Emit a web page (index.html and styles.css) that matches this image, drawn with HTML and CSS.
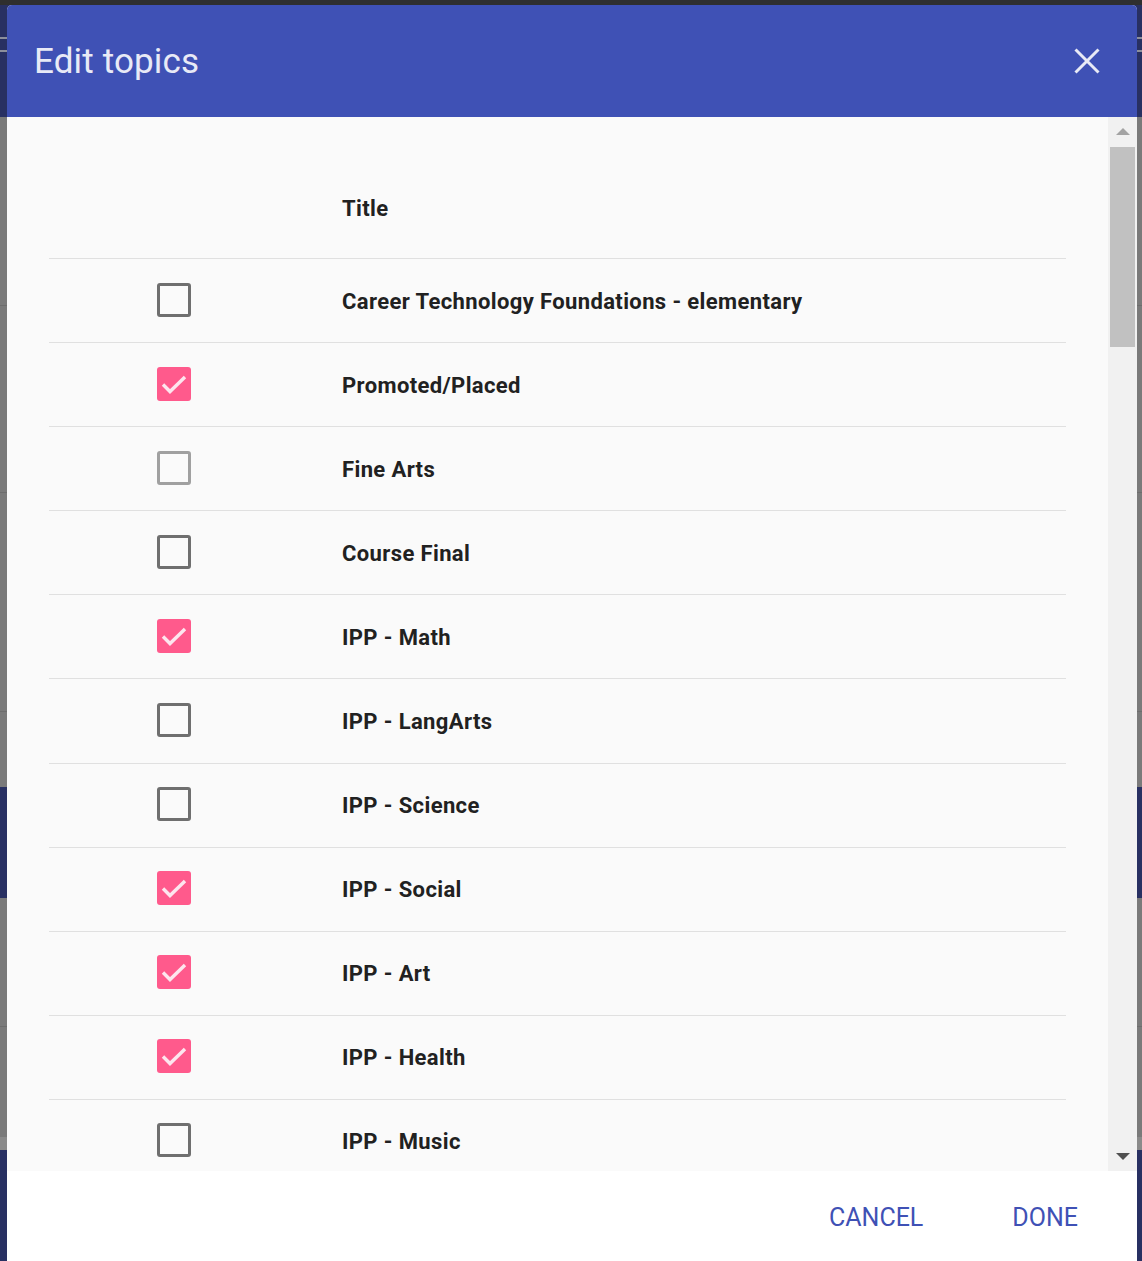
FILE: index.html
```html
<!DOCTYPE html>
<html lang="en">
<head>
<meta charset="utf-8">
<title>Edit topics</title>
<link rel="stylesheet" href="styles.css">
</head>
<body>
<div class="backdrop">
  <div class="dialog">
    <header class="dialog-header">
      <h1 class="dialog-title">Edit topics</h1>
      <button class="close-btn" aria-label="Close">
        <svg width="26" height="26" viewBox="0 0 26 26"><path d="M1.5 1.5 L24.5 24.5 M24.5 1.5 L1.5 24.5" stroke="#e8eaf6" stroke-width="3" fill="none"/></svg>
      </button>
    </header>
    <div class="dialog-body">
      <div class="scroll">
        <div class="table">
          <div class="row head"><div class="cell-check"></div><div class="cell-title">Title</div></div>
          <div class="row"><div class="cell-check"><span class="cb"></span></div><div class="cell-title">Career Technology Foundations - elementary</div></div>
          <div class="row"><div class="cell-check"><span class="cb checked"><svg viewBox="0 0 34 34"><polyline points="6,17.5 13,24.5 28,10"/></svg></span></div><div class="cell-title">Promoted/Placed</div></div>
          <div class="row"><div class="cell-check"><span class="cb light"></span></div><div class="cell-title">Fine Arts</div></div>
          <div class="row"><div class="cell-check"><span class="cb"></span></div><div class="cell-title">Course Final</div></div>
          <div class="row"><div class="cell-check"><span class="cb checked"><svg viewBox="0 0 34 34"><polyline points="6,17.5 13,24.5 28,10"/></svg></span></div><div class="cell-title">IPP - Math</div></div>
          <div class="row"><div class="cell-check"><span class="cb"></span></div><div class="cell-title">IPP - LangArts</div></div>
          <div class="row"><div class="cell-check"><span class="cb"></span></div><div class="cell-title">IPP - Science</div></div>
          <div class="row"><div class="cell-check"><span class="cb checked"><svg viewBox="0 0 34 34"><polyline points="6,17.5 13,24.5 28,10"/></svg></span></div><div class="cell-title">IPP - Social</div></div>
          <div class="row"><div class="cell-check"><span class="cb checked"><svg viewBox="0 0 34 34"><polyline points="6,17.5 13,24.5 28,10"/></svg></span></div><div class="cell-title">IPP - Art</div></div>
          <div class="row"><div class="cell-check"><span class="cb checked"><svg viewBox="0 0 34 34"><polyline points="6,17.5 13,24.5 28,10"/></svg></span></div><div class="cell-title">IPP - Health</div></div>
          <div class="row"><div class="cell-check"><span class="cb"></span></div><div class="cell-title">IPP - Music</div></div>
        </div>
      </div>
      <div class="scrollbar">
        <div class="sb-btn"><svg width="14" height="8" viewBox="0 0 14 8"><polygon points="0,7 7,0 14,7" fill="#a3a3a3"/></svg></div>
        <div class="sb-track"><div class="sb-thumb"></div></div>
        <div class="sb-btn"><svg width="14" height="8" viewBox="0 0 14 8"><polygon points="0,1 14,1 7,8" fill="#505050"/></svg></div>
      </div>
    </div>
    <footer class="dialog-footer">
      <button class="text-btn">CANCEL</button>
      <button class="text-btn">DONE</button>
    </footer>
  </div>
</div>
</body>
</html>
```

FILE: styles.css
```css
html, body {
  margin: 0;
  padding: 0;
}
body {
  width: 1142px;
  height: 1261px;
  overflow: hidden;
  font-family: Roboto, "Noto Sans", Arial, sans-serif;
  background: linear-gradient(to bottom,
    #2f2f2f 0px, #2f2f2f 5px,
    #283062 5px, #283062 37px,
    #8c8f9c 37px, #8c8f9c 39px,
    #283062 39px, #283062 50px,
    #8c8f9c 50px, #8c8f9c 52px,
    #283062 52px, #283062 117px,
    #7a7a7a 117px, #7a7a7a 305px,
    #6d6d6d 305px, #6d6d6d 306px,
    #7a7a7a 306px, #7a7a7a 492px,
    #6d6d6d 492px, #6d6d6d 493px,
    #7a7a7a 493px, #7a7a7a 711px,
    #6d6d6d 711px, #6d6d6d 712px,
    #7a7a7a 712px, #7a7a7a 787px,
    #283062 787px, #283062 898px,
    #7a7a7a 898px, #7a7a7a 1026px,
    #6d6d6d 1026px, #6d6d6d 1027px,
    #7a7a7a 1027px, #7a7a7a 1137px,
    #8a8a8a 1137px, #8a8a8a 1150px,
    #283062 1150px, #283062 1261px);
}
.backdrop {
  padding: 5px 5px 0 7px;
  height: 1256px;
}
.dialog {
  width: 1130px;
  height: 1256px;
  border-radius: 5px 5px 0 0;
  overflow: hidden;
  display: flex;
  flex-direction: column;
  background: #fff;
}
.dialog-header {
  height: 112px;
  flex: none;
  background: #3f51b5;
  display: flex;
  align-items: center;
  justify-content: space-between;
  padding: 0 37px 0 27px;
  box-sizing: border-box;
}
.dialog-title {
  margin: 0;
  font-size: 35px;
  font-weight: 400;
  color: #e8eaf6;
  letter-spacing: 0.15px;
}
.close-btn {
  background: none;
  border: 0;
  padding: 0;
  width: 26px;
  height: 26px;
  display: flex;
}
.dialog-body {
  height: 1054px;
  flex: none;
  display: flex;
  background: #fafafa;
}
.scroll {
  flex: 1;
  overflow: hidden;
  padding: 40px 42px 0 42px;
}
.table {
  display: flex;
  flex-direction: column;
}
.row {
  display: grid;
  grid-template-columns: 293px 1fr;
  align-items: center;
  height: 84.1px;
  box-sizing: border-box;
  border-top: 1px solid #e0e0e0;
  flex: none;
}
.row.head {
  height: 101px;
  border-top: 0;
}
.cell-check {
  display: flex;
  padding-left: 108px;
  padding-bottom: 2px;
}
.cell-title {
  font-size: 22px;
  font-weight: 700;
  color: #212121;
  letter-spacing: 0.38px;
  padding-top: 1px;
}
.cb {
  width: 34px;
  height: 34px;
  box-sizing: border-box;
  border: 3px solid #6f6f6f;
  border-radius: 3px;
  display: block;
  position: relative;
}
.cb.light {
  border-color: #a0a0a0;
}
.cb.checked {
  border: 0;
  background: #ff5a8c;
}
.cb svg {
  width: 34px;
  height: 34px;
  display: block;
}
.cb polyline {
  fill: none;
  stroke: #fde6ee;
  stroke-width: 3.4;
}
.scrollbar {
  width: 29px;
  flex: none;
  background: #f1f1f1;
  display: flex;
  flex-direction: column;
}
.sb-btn {
  height: 30px;
  display: flex;
  align-items: center;
  justify-content: center;
  flex: none;
}
.sb-track {
  flex: 1;
  padding: 0 2px;
}
.sb-thumb {
  height: 200px;
  background: #c1c1c1;
}
.dialog-footer {
  flex: 1;
  background: #fff;
  display: flex;
  justify-content: flex-end;
  align-items: center;
  gap: 57px;
  padding-right: 43px;
  padding-top: 3px;
}
.text-btn {
  background: none;
  border: 0;
  padding: 0 16px;
  font-family: Roboto, "Noto Sans", Arial, sans-serif;
  font-size: 25px;
  font-weight: 400;
  color: #3f51b5;
  letter-spacing: 0;
}
```
